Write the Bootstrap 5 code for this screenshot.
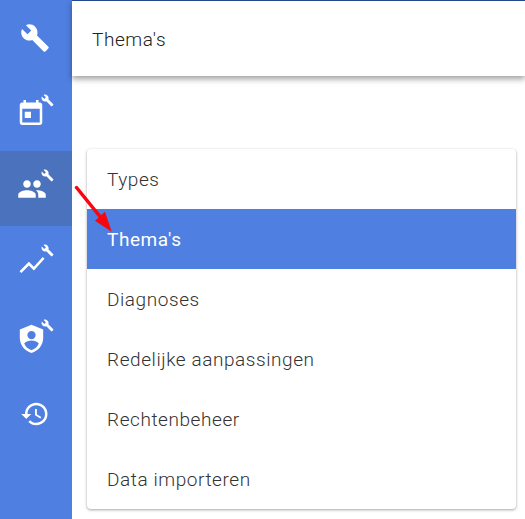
<!DOCTYPE html>
<html lang="nl">
<head>
<meta charset="utf-8">
<link rel="stylesheet" href="https://cdn.jsdelivr.net/npm/bootstrap@5.3.0/dist/css/bootstrap.min.css">
<style>
html,body{height:100%;margin:0;overflow:hidden;background:#fff;font-family:Roboto,"Liberation Sans",sans-serif}
.shell{height:519px;width:525px;position:relative}
.side-rail{width:72px;background:#4f7fe0;flex:none}
.rail-item{height:75px;width:72px;position:relative}
.rail-item.first{height:76px}
.rail-item.on{background:#4b73bd}
.rail-item svg{position:absolute;fill:#fff}
.main-icon{width:30px;height:30px}
.mini{width:13px;height:13px;left:41px;top:18px}
.ic-wrench{left:20px;top:23px}
.ic-cal{left:16px;top:22px}
.ic-people{left:17px;top:23px}
.ic-chart{left:16.500px;top:24px}
.ic-shield{left:15px;top:21px;width:33px;height:33px}
.ic-history{left:20px;top:23px}
.top-bar{height:76px;border-top:1px solid #23468f;background:#fff;box-shadow:0 3px 6px rgba(0,0,0,.38);font-size:19px;font-weight:300;letter-spacing:.57px;color:#222;padding:3px 0 0 20px}
.menu-panel{margin:73px 9px 0 15px;border-radius:4px;box-shadow:0 1px 3px rgba(0,0,0,.36);background:#fff;overflow:hidden}
.menu-row{height:60px;padding:3px 0 0 20px;font-size:19px;font-weight:300;letter-spacing:.57px;color:#333;display:flex;align-items:center}
.menu-row.on{background:#4f7fe0;color:#fff;font-weight:400}
.arrow-mark{position:absolute;left:70px;top:180px;width:45px;height:55px}
</style>
</head>
<body>
<div class="shell d-flex">
  <nav class="side-rail">
    <div class="rail-item first"><svg class="main-icon ic-wrench" viewBox="0 0 24 24"><path d="M22.7 19l-9.1-9.1c.9-2.3.4-5-1.5-6.9-2-2-5-2.4-7.4-1.3L9 6 6 9 1.6 4.7C.4 7.1.9 10.1 2.9 12.1c1.9 1.9 4.6 2.4 6.9 1.5l9.1 9.1c.4.4 1 .4 1.4 0l2.3-2.3c.5-.4.5-1.1.1-1.4z"/></svg></div>
    <div class="rail-item"><svg class="main-icon ic-cal" viewBox="0 0 24 24"><path d="M12 11H7v5h5v-5zM16 1.500v2H8v-2H6v2H5c-1.110 0-1.990.9-1.990 2L3 19.500c0 1.100.89 2 2 2h14c1.100 0 2-.9 2-2v-14c0-1.100-.9-2-2-2h-1v-2h-2zm3 18H5v-11h14v11z"/></svg><svg class="mini" viewBox="0 0 24 24"><use href="#wr"/></svg></div>
    <div class="rail-item on"><svg class="main-icon ic-people" viewBox="0 0 24 24"><path d="M16 11c1.660 0 2.990-1.340 2.990-3S17.660 5 16 5c-1.660 0-3 1.340-3 3s1.340 3 3 3zm-8 0c1.660 0 2.990-1.340 2.990-3S9.660 5 8 5C6.340 5 5 6.340 5 8s1.340 3 3 3zm0 2c-2.330 0-7 1.170-7 3.500V19h14v-2.500c0-2.330-4.670-3.500-7-3.500zm8 0c-.29 0-.62.02-.97.05 1.160.84 1.970 1.970 1.970 3.450V19h6v-2.500c0-2.330-4.670-3.500-7-3.500z"/></svg><svg class="mini" viewBox="0 0 24 24"><use href="#wr"/></svg></div>
    <div class="rail-item"><svg class="main-icon ic-chart" viewBox="0 0 24 24"><path d="M3.500 18.490l6-6.010 4 4L22 6.920l-1.410-1.410-7.090 7.970-4-4L2 16.990z"/></svg><svg class="mini" viewBox="0 0 24 24"><use href="#wr"/></svg></div>
    <div class="rail-item"><svg class="ic-shield" viewBox="0 0 24 24"><path fill-rule="evenodd" d="M12 2L3.500 5.500v6.200c0 5 3.600 9.700 8.500 10.800 4.900-1.100 8.500-5.800 8.500-10.800V5.500L12 2zm0 4.500a3 3 0 1 1 0 6 3 3 0 0 1 0-6zm0 14c-2.400-.7-4.400-2.500-5.300-4.800 1-1.500 3.400-2.200 5.300-2.200s4.300.7 5.300 2.200c-.9 2.300-2.900 4.100-5.300 4.800z"/></svg><svg class="mini" viewBox="0 0 24 24"><use href="#wr"/></svg></div>
    <div class="rail-item"><svg class="main-icon ic-history" viewBox="0 0 24 24"><path d="M13 3c-4.970 0-9 4.030-9 9H1l3.890 3.890.07.14L9 12H6c0-3.870 3.130-7 7-7s7 3.130 7 7-3.130 7-7 7c-1.930 0-3.680-.79-4.940-2.060l-1.420 1.420C8.270 19.990 10.510 21 13 21c4.970 0 9-4.030 9-9s-4.030-9-9-9zm-1 5v5l4.280 2.540.72-1.210-3.500-2.080V8H12z"/></svg></div>
  </nav>
  <main class="flex-grow-1">
    <div class="top-bar d-flex align-items-center">Thema's</div>
    <div class="menu-panel">
      <div class="menu-row">Types</div>
      <div class="menu-row on">Thema's</div>
      <div class="menu-row">Diagnoses</div>
      <div class="menu-row">Redelijke aanpassingen</div>
      <div class="menu-row">Rechtenbeheer</div>
      <div class="menu-row">Data importeren</div>
    </div>
  </main>
  <svg class="arrow-mark" viewBox="0 0 45 55"><line x1="6.500" y1="7.500" x2="32" y2="39" stroke="#f7060f" stroke-width="3.500" stroke-linecap="round"/><polygon points="41.700,51.700 25,40.700 35,31.700" fill="#f7060f"/></svg>
</div>
<svg width="0" height="0" class="position-absolute"><defs><path id="wr" d="M22.700 19l-9.100-9.100c.9-2.300.4-5-1.500-6.900-2-2-5-2.400-7.400-1.300L9 6 6 9 1.600 4.700C.4 7.100.9 10.100 2.900 12.100c1.900 1.900 4.600 2.400 6.900 1.500l9.100 9.100c.4.400 1 .4 1.400 0l2.300-2.300c.5-.4.5-1.100.1-1.400z"/></defs></svg>
</body>
</html>
